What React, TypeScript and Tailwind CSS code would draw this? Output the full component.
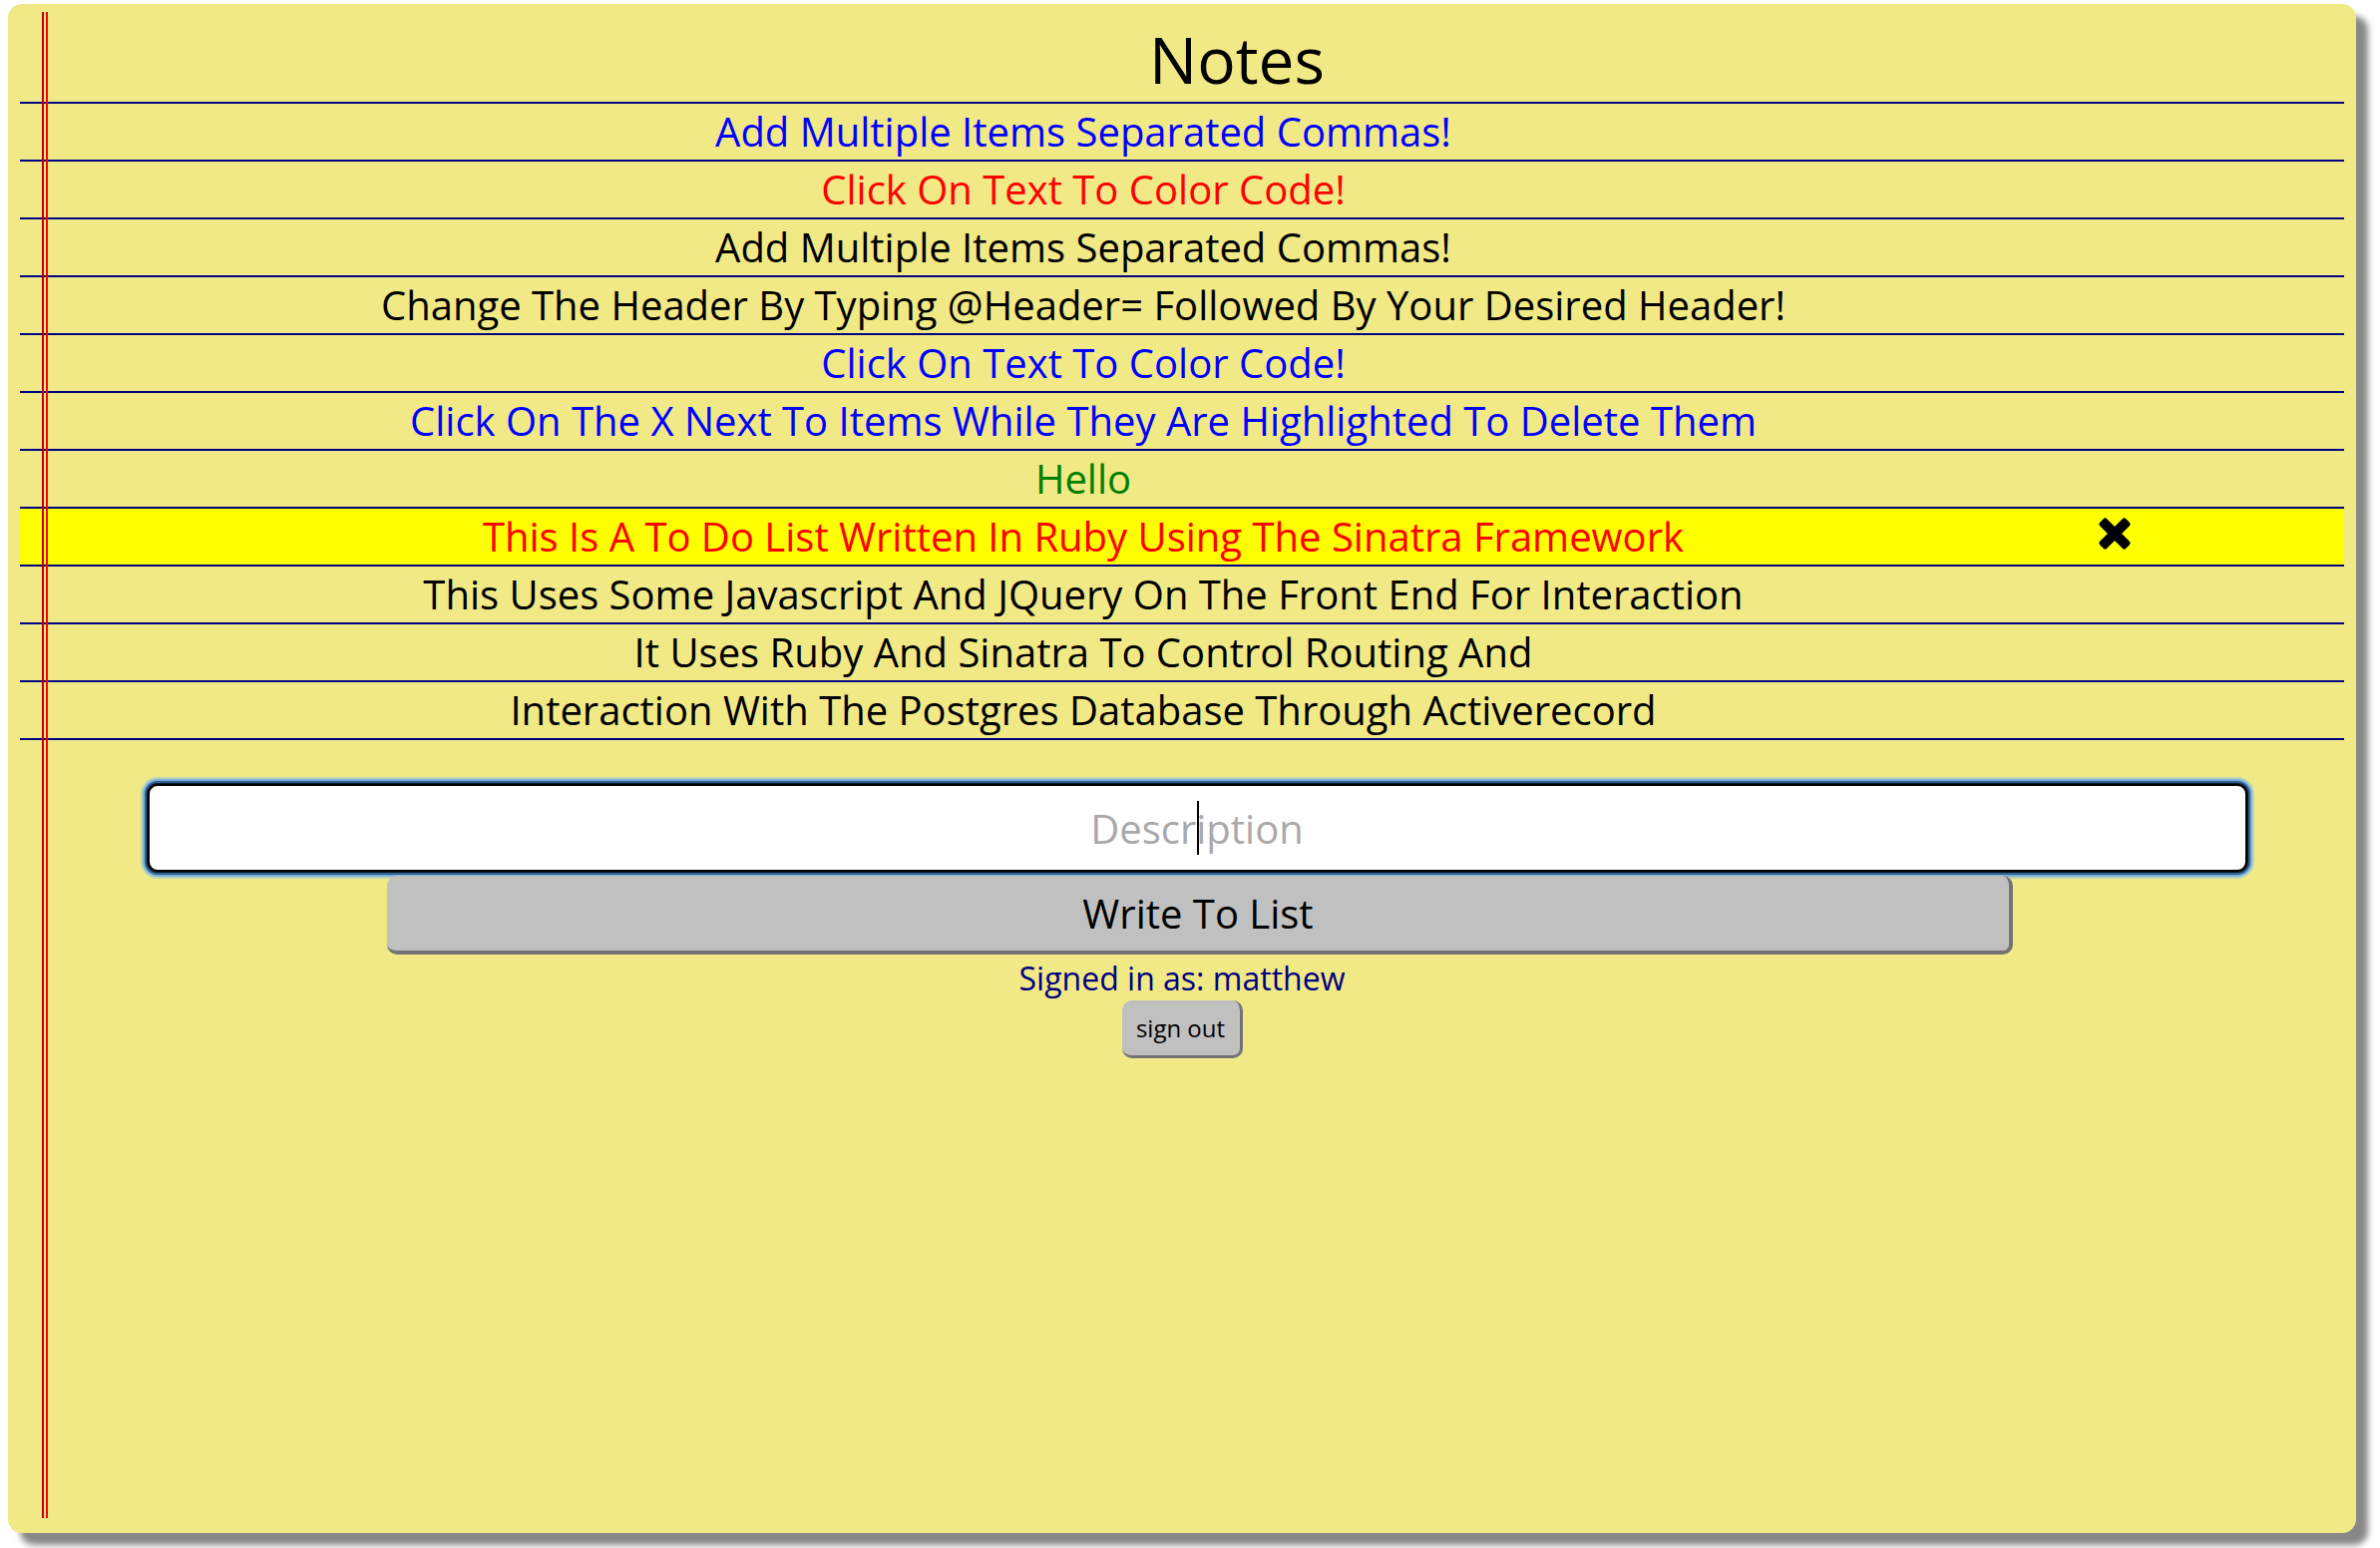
import React from 'react'

type Note = { text: string; color: string; highlighted?: boolean }

const NOTES: Note[] = [
  { text: 'Add Multiple Items Separated Commas!', color: 'text-[#0000ff]' },
  { text: 'Click On Text To Color Code!', color: 'text-[#ff0000]' },
  { text: 'Add Multiple Items Separated Commas!', color: 'text-black' },
  { text: 'Change The Header By Typing @Header= Followed By Your Desired Header!', color: 'text-black' },
  { text: 'Click On Text To Color Code!', color: 'text-[#0000ff]' },
  { text: 'Click On The X Next To Items While They Are Highlighted To Delete Them', color: 'text-[#0000ff]' },
  { text: 'Hello', color: 'text-[#008000]' },
  { text: 'This Is A To Do List Written In Ruby Using The Sinatra Framework', color: 'text-[#ff0000]', highlighted: true },
  { text: 'This Uses Some Javascript And JQuery On The Front End For Interaction', color: 'text-black' },
  { text: 'It Uses Ruby And Sinatra To Control Routing And', color: 'text-black' },
  { text: 'Interaction With The Postgres Database Through Activerecord', color: 'text-black' },
]

function DeleteIcon() {
  return (
    <svg width="34" height="34" viewBox="0 0 34 34" aria-hidden="true">
      <rect x="-1.5" y="12" width="37" height="10" rx="2.5" fill="#000" transform="rotate(45 17 17)" />
      <rect x="-1.5" y="12" width="37" height="10" rx="2.5" fill="#000" transform="rotate(-45 17 17)" />
    </svg>
  )
}

function NoteRow({ note }: { note: Note }) {
  return (
    <li
      className={`relative flex h-[58px] items-center justify-center border-b-2 border-[#000080] pr-[198px] text-[40px] leading-[56px] ${note.color} ${
        note.highlighted ? 'bg-[#ffff00]' : ''
      }`}
    >
      <span className="whitespace-nowrap">{note.text}</span>
      {note.highlighted && (
        <span className="absolute right-[213px] top-[8px] flex">
          <DeleteIcon />
        </span>
      )}
    </li>
  )
}

export default function App() {
  return (
    <div
      className="min-h-screen w-full overflow-hidden bg-white pl-[8px] pt-[4px]"
      style={{ fontFamily: '"Open Sans", "Noto Sans", sans-serif' }}
    >
      <div className="relative flex h-[1533px] w-[2354px] flex-col rounded-[14px] bg-[#f1e985] shadow-[12px_12px_6px_#888]">
        {/* Notebook margin lines */}
        <div className="absolute left-[34px] top-[8px] z-10 flex h-[1510px] gap-[2px]">
          <div className="w-[2px] bg-[#b80000]" />
          <div className="w-[2px] bg-[#ff0000]" />
        </div>

        <div className="mx-[12px]">
          <h1 className="border-b-2 border-[#000080] pb-[10px] pl-[110px] pt-[24px] text-center text-[64px] leading-none text-black">
            Notes
          </h1>
          <ul>
            {NOTES.map((note, i) => (
              <NoteRow key={i} note={note} />
            ))}
          </ul>
        </div>

        {/* Form */}
        <form className="mt-[44px] flex flex-col items-center gap-[4px] pl-[30px]" onSubmit={(e) => e.preventDefault()}>
          <div className="relative h-[88px] w-[2105px]">
            <input
              type="text"
              placeholder="Description"
              className="h-full w-full rounded-[10px] border-2 border-black bg-white text-center text-[40px] text-black outline-none placeholder:text-[#a9a9a9] shadow-[0_0_0_1px_#0b1a2a,0_0_0_3px_#2d5f8f,0_0_0_5px_#7db1d9,0_0_0_7px_#bcd5b9]"
            />
            <div className="pointer-events-none absolute left-[1052px] top-[17px] h-[54px] w-[2px] bg-black" />
          </div>
          <button
            type="submit"
            className="relative z-10 ml-[6px] flex h-[79px] w-[1630px] items-center justify-center rounded-[10px] border-b-4 border-r-4 border-[#737373] bg-[#c0c0c0] text-[40px] leading-normal text-black"
          >
            Write To List
          </button>
        </form>

        <div className="flex flex-col items-center">
          <p className="text-[32px] leading-normal text-[#000080]">Signed in as: matthew</p>
          <button className="-mt-[2px] flex h-[58px] w-[121px] items-center justify-center rounded-[10px] border-b-[3px] border-r-[3px] border-[#737373] bg-[#c0c0c0] text-[24px] leading-normal text-black">
            sign out
          </button>
        </div>
      </div>
    </div>
  )
}
